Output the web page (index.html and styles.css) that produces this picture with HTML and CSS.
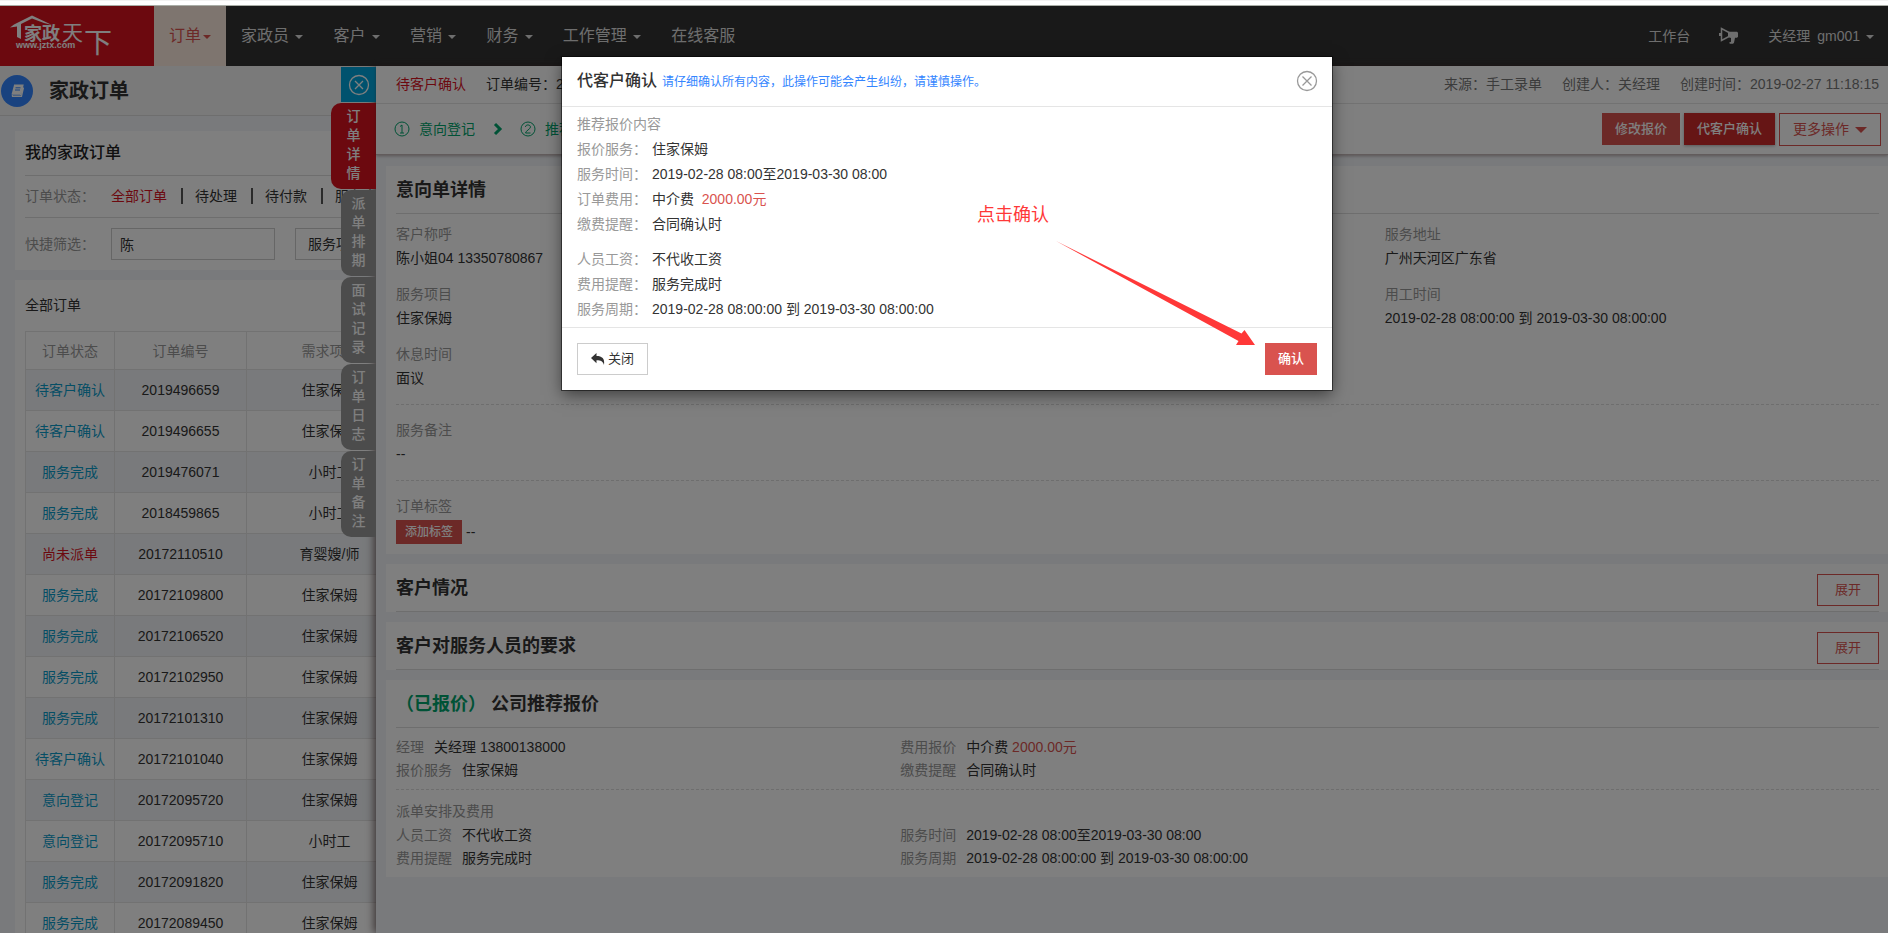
FILE: index.html
```html
<!DOCTYPE html>
<html lang="zh-CN">
<head>
<meta charset="utf-8">
<title>家政订单</title>
<link rel="stylesheet" href="styles.css">
</head>
<body>
<div class="strip"></div>
<div class="app">
  <header class="nav">
    <a class="logo" href="#" aria-label="家政天下">
      <svg width="154" height="60" viewBox="0 6 154 60">
        <path d="M10 27.500 L14 24.500 L32 15.500 L52 25 L44 23 L32 18.500 L21 24 L21 39 L17 37 L17 26.500 Z" fill="#fff"/>
        <text x="24" y="40" class="logo-main">家政</text>
        <text x="62" y="40" class="logo-sky">天</text>
        <text x="84" y="53" class="logo-under">下</text>
        <text x="16" y="48" class="logo-url">www.jztx.com</text>
      </svg>
    </a>
    <nav class="menu">
      <a class="menu-item current" href="#">订单<i class="caret"></i></a>
      <a class="menu-item" href="#">家政员 <i class="caret"></i></a>
      <a class="menu-item" href="#">客户 <i class="caret"></i></a>
      <a class="menu-item" href="#">营销 <i class="caret"></i></a>
      <a class="menu-item" href="#">财务 <i class="caret"></i></a>
      <a class="menu-item" href="#">工作管理 <i class="caret"></i></a>
      <a class="menu-item" href="#">在线客服</a>
    </nav>
    <div class="user">
      <a href="#">工作台</a>
      <a class="horn" href="#" aria-label="公告">
        <svg width="20" height="18" viewBox="0 0 20 18">
          <path d="M2.500 1.500V13.500L10 9.500V5.500Z" fill="none" stroke="currentColor" stroke-width="1.500"/>
          <path d="M0 6h2v3H0z M9 4.800h9l1 1v4l-1 1h-2l-1 5-1 1h-3l-1-1 2-1V11l-3-1z" fill="currentColor"/>
        </svg>
      </a>
      <a href="#">关经理&ensp;gm001 <i class="caret"></i></a>
    </div>
  </header>

  <main class="list">
    <div class="list-head">
      <span class="badge">
        <svg width="16" height="16" viewBox="0 0 16 16">
          <path d="M5 2h9l-2.500 10H3.500a1.500 1.500 0 0 0 0 1.500h9l2-9" fill="none" stroke="#fff" stroke-width="1.200"/>
          <path d="M5 2h9l-2.500 9.500H2.500z" fill="#fff"/>
          <path d="M6.500 4.800h5M6 7h5" stroke="#3385ff" stroke-width="1"/>
        </svg>
      </span>
      <h1>家政订单</h1>
    </div>
    <section class="panel filter">
      <h2>我的家政订单</h2>
      <div class="filter-row states">
        <span class="filter-label">订单状态：</span>
        <a class="on" href="#">全部订单</a><a href="#">待处理</a><a href="#">待付款</a><a href="#">服务中</a>
      </div>
      <div class="filter-row">
        <label class="filter-label" for="quick">快捷筛选：</label>
        <input id="quick" type="text" value="陈">
        <select aria-label="服务项目"><option>服务项目</option></select>
      </div>
    </section>
    <section class="panel orders">
      <h3>全部订单</h3>
      <table>
        <thead><tr><th class="c-state">订单状态</th><th class="c-no">订单编号</th><th class="c-item">需求项目</th></tr></thead>
        <tbody>
          <tr><td><a href="#">待客户确认</a></td><td>2019496659</td><td>住家保姆</td></tr>
          <tr><td><a href="#">待客户确认</a></td><td>2019496655</td><td>住家保姆</td></tr>
          <tr><td><a href="#">服务完成</a></td><td>2019476071</td><td>小时工</td></tr>
          <tr><td><a href="#">服务完成</a></td><td>2018459865</td><td>小时工</td></tr>
          <tr><td><a class="alert" href="#">尚未派单</a></td><td>20172110510</td><td>育婴嫂/师</td></tr>
          <tr><td><a href="#">服务完成</a></td><td>20172109800</td><td>住家保姆</td></tr>
          <tr><td><a href="#">服务完成</a></td><td>20172106520</td><td>住家保姆</td></tr>
          <tr><td><a href="#">服务完成</a></td><td>20172102950</td><td>住家保姆</td></tr>
          <tr><td><a href="#">服务完成</a></td><td>20172101310</td><td>住家保姆</td></tr>
          <tr><td><a href="#">待客户确认</a></td><td>20172101040</td><td>住家保姆</td></tr>
          <tr><td><a href="#">意向登记</a></td><td>20172095720</td><td>住家保姆</td></tr>
          <tr><td><a href="#">意向登记</a></td><td>20172095710</td><td>小时工</td></tr>
          <tr><td><a href="#">服务完成</a></td><td>20172091820</td><td>住家保姆</td></tr>
          <tr><td><a href="#">服务完成</a></td><td>20172089450</td><td>住家保姆</td></tr>
        </tbody>
      </table>
    </section>
  </main>

  <aside class="drawer">
    <div class="tabs">
      <button class="tab-close" type="button" aria-label="收起">
        <svg width="22" height="22" viewBox="0 0 22 22" fill="none" stroke="#fff" stroke-width="1.300"><circle cx="11" cy="11" r="9.500"/><path d="M7 7l8 8M15 7l-8 8"/></svg>
      </button>
      <button class="tab active" type="button">订<br>单<br>详<br>情</button>
      <button class="tab" type="button">派<br>单<br>排<br>期</button>
      <button class="tab" type="button">面<br>试<br>记<br>录</button>
      <button class="tab" type="button">订<br>单<br>日<br>志</button>
      <button class="tab" type="button">订<br>单<br>备<br>注</button>
    </div>
    <div class="drawer-head">
      <div class="meta">
        <span class="meta-state">待客户确认</span>
        <span class="meta-no">订单编号：2019496659</span>
        <span class="meta-source">来源：手工录单</span>
        <span>创建人：关经理</span>
        <span>创建时间：2019-02-27 11:18:15</span>
      </div>
      <div class="steps">
        <span class="step"><svg width="16" height="16" viewBox="0 0 16 16" fill="none" stroke="currentColor"><circle cx="8" cy="8" r="7"/><path d="M6 5.500L8 4v8M6 12h4"/></svg>意向登记</span>
        <svg class="chevron" width="10" height="14" viewBox="0 0 10 14" fill="none" stroke="currentColor" stroke-width="3"><path d="M2 2l5 5-5 5"/></svg>
        <span class="step"><svg width="16" height="16" viewBox="0 0 16 16" fill="none" stroke="currentColor"><circle cx="8" cy="8" r="7"/><path d="M5.500 6c0-3 5-2.500 5 0 0 2-5 4-5 6h5"/></svg>推荐报价</span>
        <div class="actions">
          <button class="btn btn-red" type="button">修改报价</button>
          <button class="btn btn-deep" type="button">代客户确认</button>
          <button class="btn btn-more" type="button">更多操作 <i class="caret caret-big"></i></button>
        </div>
      </div>
    </div>
    <div class="drawer-body">
      <section class="card">
        <div class="card-title"><h2>意向单详情</h2></div>
        <dl class="facts">
          <div><dt>客户称呼</dt><dd>陈小姐04 13350780867</dd></div>
          <div></div>
          <div><dt>服务地址</dt><dd>广州天河区广东省</dd></div>
          <div><dt>服务项目</dt><dd>住家保姆</dd></div>
          <div></div>
          <div><dt>用工时间</dt><dd>2019-02-28 08:00:00 到 2019-03-30 08:00:00</dd></div>
          <div><dt>休息时间</dt><dd>面议</dd></div>
        </dl>
        <dl class="note"><dt>服务备注</dt><dd>--</dd></dl>
        <dl class="note"><dt>订单标签</dt><dd class="tags"><button class="btn-tag" type="button">添加标签</button>--</dd></dl>
      </section>
      <section class="card">
        <div class="card-title"><h2>客户情况</h2><button class="btn btn-line" type="button">展开</button></div>
      </section>
      <section class="card">
        <div class="card-title"><h2>客户对服务人员的要求</h2><button class="btn btn-line" type="button">展开</button></div>
      </section>
      <section class="card">
        <div class="card-title"><h2><span class="quoted">（已报价）</span> 公司推荐报价</h2></div>
        <dl class="quote">
          <div><dt>经理</dt><dd>关经理 13800138000</dd></div>
          <div><dt>费用报价</dt><dd>中介费 <span class="money">2000.00元</span></dd></div>
          <div><dt>报价服务</dt><dd>住家保姆</dd></div>
          <div><dt>缴费提醒</dt><dd>合同确认时</dd></div>
        </dl>
        <div class="dispatch">
          <h3>派单安排及费用</h3>
          <dl class="quote">
            <div><dt>人员工资</dt><dd>不代收工资</dd></div>
            <div><dt>服务时间</dt><dd>2019-02-28 08:00至2019-03-30 08:00</dd></div>
            <div><dt>费用提醒</dt><dd>服务完成时</dd></div>
            <div><dt>服务周期</dt><dd>2019-02-28 08:00:00 到 2019-03-30 08:00:00</dd></div>
          </dl>
        </div>
      </section>
    </div>
  </aside>

  <div class="backdrop">
    <div class="modal" role="dialog" aria-labelledby="modal-title">
      <div class="modal-head">
        <h2 id="modal-title">代客户确认</h2>
        <small>请仔细确认所有内容，此操作可能会产生纠纷，请谨慎操作。</small>
        <button class="modal-x" type="button" aria-label="关闭窗口">
          <svg width="22" height="22" viewBox="0 0 22 22" fill="none" stroke="#999" stroke-width="1.300"><circle cx="11" cy="11" r="9.500"/><path d="M6.500 6.500l9 9M15.500 6.500l-9 9"/></svg>
        </button>
      </div>
      <div class="modal-body">
        <h3>推荐报价内容</h3>
        <dl>
          <div><dt>报价服务：</dt><dd>住家保姆</dd></div>
          <div><dt>服务时间：</dt><dd>2019-02-28 08:00至2019-03-30 08:00</dd></div>
          <div><dt>订单费用：</dt><dd>中介费 <span class="money">&nbsp;2000.00元</span></dd></div>
          <div><dt>缴费提醒：</dt><dd>合同确认时</dd></div>
        </dl>
        <dl>
          <div><dt>人员工资：</dt><dd>不代收工资</dd></div>
          <div><dt>费用提醒：</dt><dd>服务完成时</dd></div>
          <div><dt>服务周期：</dt><dd>2019-02-28 08:00:00 到 2019-03-30 08:00:00</dd></div>
        </dl>
      </div>
      <div class="modal-foot">
        <button class="btn btn-plain" type="button"><svg width="14" height="12" viewBox="0 0 14 12"><path d="M5.500 0v3c5.500 0 8.500 2.500 7.500 9C12 8.500 10 7.300 5.500 7.300v3L0 5.100z" fill="#333"/></svg>关闭</button>
        <button class="btn btn-red" type="button">确认</button>
      </div>
      <p class="callout">点击确认</p>
      <svg class="arrow" width="200" height="106" viewBox="0 0 200 106"><path d="M0 0L185.500 92.500L188.500 89L199 104H180L182.500 100Z" fill="#ff3838"/></svg>
    </div>
  </div>
</div>
</body>
</html>
```

FILE: styles.css
```css
* { box-sizing: border-box; }
body {
  display: flex;
  flex-direction: column;
  height: 100vh;
  margin: 0;
  overflow: hidden;
  background: #fff;
  color: #333;
  font: 14px/20px "Liberation Sans", Arial, "Noto Sans CJK SC", sans-serif;
}
h1, h2, h3, p, dl, dd { margin: 0; }
a { color: inherit; text-decoration: none; }
button, input, select { font: inherit; color: inherit; }
button { padding: 0; border: 0; background: none; cursor: pointer; }
svg { display: block; }

.strip { flex: none; height: 6px; border-top: 1px solid #f2f2f2; border-bottom: 1px solid #a9ada6; }
.app { position: relative; flex: 1; min-height: 0; overflow: hidden; background: #f2f5f8; }

.caret {
  display: inline-block;
  margin-left: 2px;
  border: 4px solid transparent;
  border-top-color: currentColor;
  border-bottom: 0;
  vertical-align: middle;
}
.caret-big { border-width: 6px 6px 0; }

/* top bar */
.nav { display: flex; height: 60px; background: #333; color: #ddd; }
.logo { width: 154px; background: #d9131f; }
.logo text { fill: #fff; font-family: "Noto Sans CJK SC", sans-serif; }
.logo-main { font-size: 18px; font-weight: 700; }
.logo-sky { font-size: 21px; }
.logo-under { font-size: 28px; }
.logo .logo-url { font: 700 9px "Liberation Sans", Arial, sans-serif; }
.menu { display: flex; font-size: 16px; line-height: 60px; }
.menu-item { padding: 0 15px; white-space: nowrap; }
.menu-item.current { background: #fdeadf; color: #d9534f; }
.user { display: flex; align-items: center; gap: 29px; height: 60px; margin-left: auto; padding-right: 14px; }

/* order list */
.list-head {
  display: flex;
  align-items: center;
  gap: 16px;
  height: 50px;
  padding-left: 1px;
  border-bottom: 1px solid #dcdcdc;
  background: #f5f5f5;
}
.list-head h1 { font-size: 20px; line-height: 28px; }
.badge { display: grid; place-items: center; width: 32px; height: 32px; border-radius: 50%; background: #3385ff; }
.panel { margin-left: 15px; padding: 0 10px; background: #fff; }
.filter { margin-top: 15px; height: 139px; }
.filter h2 { padding: 9px 0; border-bottom: 1px solid #ddd; font-size: 16px; font-weight: 500; line-height: 26px; color: #222; }
.filter-row { display: flex; align-items: center; height: 53px; padding-bottom: 1px; }
.filter-label { width: 86px; color: #999; }
.states { height: 42px; padding-bottom: 2px; border-bottom: 1px solid #ddd; }
.states a { line-height: 16px; }
.states a + a { margin-left: 14px; padding-left: 12px; border-left: 2px solid #555; }
.states .on { color: #d9131f; }
.filter-row input { width: 164px; height: 32px; padding: 0 8px; border: 1px solid #ccc; background: #fff; }
.filter-row select { width: 110px; height: 32px; margin-left: 20px; padding: 0 8px; border: 1px solid #ccc; background: #fff; }
.orders { margin-top: 10px; }
.orders h3 { padding: 15px 0 16px; font-size: 14px; font-weight: 400; line-height: 20px; }
table { width: 388px; border-collapse: collapse; table-layout: fixed; text-align: center; }
th, td { height: 41px; padding: 0; border: 1px solid #e4e4e4; }
th { height: 38px; font-weight: 400; color: #999; }
.c-state { width: 89px; }
.c-no { width: 132px; }
td a { color: #0b9ccb; }
td .alert { color: #d9131f; }
tbody tr:nth-child(odd) { background: #f2f5f8; }

/* detail drawer laid over the list */
.drawer {
  position: absolute;
  top: 60px;
  right: 0;
  bottom: 0;
  left: 376px;
  background: #f2f5f8;
  box-shadow: -2px 0 8px rgba(60, 40, 40, .7);
}
.tabs { position: absolute; top: 1px; right: 100%; display: flex; flex-direction: column; align-items: flex-end; gap: 1px; }
.tab-close { display: grid; place-items: center; width: 35px; height: 35px; background: #00a5dc; }
.tab { width: 35px; padding: 4px 0 6px; border-radius: 10px 0 0 10px; background: #999; color: #fff; font-size: 14px; font-weight: 500; line-height: 19px; }
.tab.active { width: 45px; background: #d9131f; }

.drawer-head { position: relative; border-bottom: 1px solid #c4b8b8; background: #fff; box-shadow: 0 1px 3px rgba(80, 50, 50, .4); }
.meta { display: flex; align-items: center; gap: 20px; height: 38px; padding: 0 9px 2px 20px; border-bottom: 1px solid #e5e5e5; color: #777; white-space: nowrap; }
.meta-state { color: #d9131f; }
.meta-no { color: #333; }
.meta-source { margin-left: auto; }
.steps { display: flex; align-items: center; height: 50px; padding: 0 7px 0 18px; color: #00a46c; }
.step { display: flex; align-items: center; gap: 9px; }
.chevron { margin: 0 17px 0 18px; }
.actions { display: flex; gap: 4px; align-items: center; margin-left: auto; }
.btn { height: 32px; padding: 0 13px; font-size: 13px; }
.btn-red { background: #d9534f; color: #fff; font-weight: 500; }
.btn-deep { background: #cc2b2b; color: #fff; font-weight: 500; box-shadow: 0 1px 3px rgba(0, 0, 0, .3); }
.btn-more { height: 33px; border: 1px solid #d9534f; color: #d9534f; font-size: 14px; }
.btn-line { width: 62px; border: 1px solid #d9534f; color: #d9534f; }
.btn-plain { display: flex; align-items: center; gap: 3px; border: 1px solid #ccc; background: #fff; }

.drawer-body { display: flex; flex-direction: column; gap: 10px; padding: 11px 0 0 10px; }
.card { padding: 0 9px 0 10px; background: #fff; }
.card-title { display: flex; align-items: center; justify-content: space-between; height: 48px; border-bottom: 1px solid #ddd; }
.card-title .btn { margin-top: 5px; }
.card-title h2 { font-size: 18px; line-height: 24px; }
.quoted { color: #00a46c; }
.facts { display: grid; grid-template-columns: repeat(3, 1fr); padding: 8px 0 2px; line-height: 24px; }
.facts div { min-height: 60px; padding-bottom: 12px; }
dt { color: #999; }
.note { padding: 13px 0 14px; border-top: 1px dashed #ddd; line-height: 24px; }
.note:last-child { padding-bottom: 10px; }
.tags { display: flex; gap: 4px; margin-top: 2px; }
.btn-tag { width: 66px; height: 24px; background: #d9534f; color: #fff; font-size: 12px; font-weight: 500; }
.quote { display: grid; grid-template-columns: 34fr 66fr; padding: 8px 0 7px; line-height: 23px; }
.quote div { display: flex; gap: 10px; }
.dispatch { padding: 8px 0 7px; border-top: 1px dashed #ddd; }
.dispatch h3 { font-size: 14px; font-weight: 400; line-height: 26px; color: #999; }
.dispatch .quote { padding: 0; }
.money { color: #d9534f; }

/* confirmation dialog */
.backdrop { position: absolute; inset: 0; display: flex; justify-content: center; align-items: flex-start; padding: 51px 0 0 6px; background: rgba(0, 0, 0, .5); }
.modal { position: relative; width: 770px; background: #fff; box-shadow: 0 0 0 1px rgba(0, 0, 0, .5), 0 5px 15px rgba(0, 0, 0, .5); }
.modal-head { display: flex; align-items: center; gap: 5px; height: 50px; padding: 0 14px 2px 15px; border-bottom: 1px solid #e5e5e5; }
.modal-head h2 { font-size: 16px; font-weight: 500; line-height: 24px; }
.modal-head small { padding-top: 2px; font-size: 12px; color: #3385ff; }
.modal-x { margin-left: auto; }
.modal-body { padding: 5px 15px; line-height: 25px; }
.modal-body h3 { font-size: 14px; font-weight: 400; color: #999; }
.modal-body dl + dl { margin-top: 10px; }
.modal-body dl div { display: flex; }
.modal-body dt { width: 75px; }
.modal-foot { display: flex; justify-content: space-between; padding: 15px; border-top: 1px solid #e5e5e5; }
.callout { position: absolute; top: 146px; left: 415px; color: #ff3838; font-size: 18px; line-height: 24px; }
.arrow { position: absolute; top: 184px; left: 494px; }
```
